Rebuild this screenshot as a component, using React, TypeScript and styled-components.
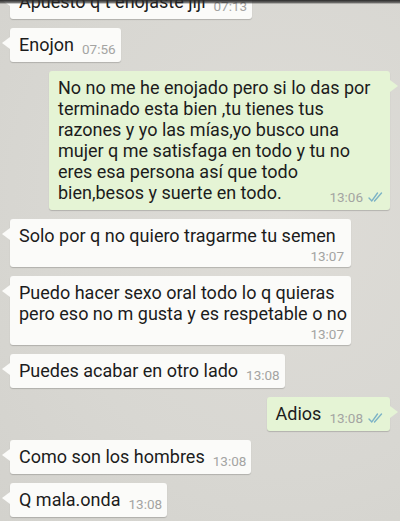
import styled, { createGlobalStyle } from 'styled-components'

const GlobalStyle = createGlobalStyle`
  html, body {
    margin: 0;
    padding: 0;
    background: #d9d8d3;
  }
  body {
    font-family: Roboto, "Noto Sans", "Liberation Sans", sans-serif;
  }
`;

type Side = 'in' | 'out';

interface Message {
    side: Side;
    lines: string[];
    time: string;
    ticks?: boolean;
    stacked?: boolean;
    wide?: boolean;
}

const messages: Message[] = [
    { side: 'in', lines: ['Apuesto q t enojaste jiji'], time: '07:13' },
    { side: 'in', lines: ['Enojon'], time: '07:56' },
    {
        side: 'out',
        lines: [
            'No no me he enojado pero si lo das por',
            'terminado esta bien ,tu tienes tus',
            'razones y yo las mías,yo busco una',
            'mujer q me satisfaga en todo y tu no',
            'eres esa persona así que todo',
            'bien,besos y suerte en todo.',
        ],
        time: '13:06',
        ticks: true,
        wide: true,
    },
    { side: 'in', lines: ['Solo por q no quiero tragarme tu semen'], time: '13:07', stacked: true, wide: true },
    {
        side: 'in',
        lines: ['Puedo hacer sexo oral todo lo q quieras', 'pero eso no m gusta y es respetable o no'],
        time: '13:07',
        stacked: true,
        wide: true,
    },
    { side: 'in', lines: ['Puedes acabar en otro lado'], time: '13:08' },
    { side: 'out', lines: ['Adios'], time: '13:08', ticks: true },
    { side: 'in', lines: ['Como son los hombres'], time: '13:08' },
    { side: 'in', lines: ['Q mala.onda'], time: '13:08' },
];

const Screen = styled.div`
  width: 400px;
  height: 521px;
  overflow: hidden;
  position: relative;
  background: radial-gradient(ellipse at 70% 40%, #dedcd7 0%, #d8d7d2 60%, #d3d2cd 100%);
`;

const ActionBarShadow = styled.div`
  position: absolute;
  top: 0;
  left: 0;
  right: 0;
  height: 4px;
  background: linear-gradient(#2a2a2a, rgba(40, 40, 40, 0.6) 70%, rgba(40, 40, 40, 0));
  z-index: 2;
`;

const List = styled.div`
  display: flex;
  flex-direction: column;
  gap: 9px;
  margin-top: -15px; /* scrolled a little past the first message */
`;

const Row = styled.div<{ $side: Side }>`
  display: flex;
  justify-content: ${p => (p.$side === 'out' ? 'flex-end' : 'flex-start')};
  padding: ${p => (p.$side === 'out' ? '0 10px 0 0' : '0 0 0 10px')};
`;

const Bubble = styled.div<{ $side: Side; $wide?: boolean }>`
  position: relative;
  box-sizing: border-box;
  max-width: 341px;
  width: ${p => (p.$wide ? '341px' : 'auto')};
  padding: 6px 5px 7px 9px;
  border-radius: 3px;
  background: ${p => (p.$side === 'out' ? '#e5f4d5' : '#fbfbf9')};
  box-shadow: 0 1px 1px rgba(0, 0, 0, 0.18);
  color: #1c1c1c;
  font-size: 18px;
  line-height: 21px;

  &::before {
    content: '';
    position: absolute;
    top: 9px;
    ${p => (p.$side === 'out' ? 'right: -8px;' : 'left: -8px;')}
    border-top: 6px solid transparent;
    border-bottom: 6px solid transparent;
    ${p =>
        p.$side === 'out'
            ? 'border-left: 8px solid #e5f4d5;'
            : 'border-right: 8px solid #fbfbf9;'}
  }
`;

const Text = styled.span`
  white-space: nowrap;
`;

const Meta = styled.span<{ $stacked?: boolean }>`
  float: right;
  display: inline-flex;
  align-items: center;
  gap: 5px;
  margin: ${p => (p.$stacked ? '3px 2px -3px 8px' : '8px 0 -1px 8px')};
  font-size: 13.5px;
  line-height: 14px;
  color: #a4a4a2;
`;

const Ticks = () => (
    <svg width="17" height="12" viewBox="0 0 17 12" fill="none" stroke="#7db3c6" strokeWidth="1.4" strokeLinecap="round">
        <path d="M1 7 L3.8 10 L9.5 2" />
        <path d="M6.5 10 L13.5 2" />
    </svg>
);

const App = () => {
    return (
        <>
            <GlobalStyle />
            <Screen>
                <ActionBarShadow />
                <List>
                    {messages.map((msg, index) => (
                        <Row key={index} $side={msg.side}>
                            <Bubble $side={msg.side} $wide={msg.wide}>
                                {msg.lines.map((line, i) => (
                                    <span key={i}>
                                        {i > 0 && <br />}
                                        <Text>{line}</Text>
                                    </span>
                                ))}
                                <Meta $stacked={msg.stacked}>
                                    {msg.time}
                                    {msg.ticks && <Ticks />}
                                </Meta>
                            </Bubble>
                        </Row>
                    ))}
                </List>
            </Screen>
        </>
    );
};

export default App;
